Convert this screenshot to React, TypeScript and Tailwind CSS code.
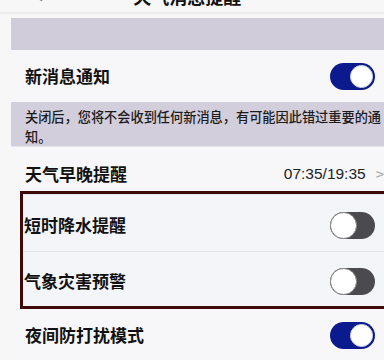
import React from "react";

const font = {
  fontFamily: '"Noto Sans CJK SC", "Noto Sans", "Liberation Sans", sans-serif',
};

function Toggle({ on }: { on: boolean }) {
  if (on) {
    return (
      <div className="w-[45px] h-[27px] rounded-full bg-[#0b1a8c] flex items-center justify-end pr-[2px] shrink-0">
        <div className="w-[23px] h-[23px] rounded-full bg-white border border-[#cfd6e8]" />
      </div>
    );
  }
  return (
    <div className="w-[45px] h-[27px] rounded-full bg-[#4a4a4f] flex items-center justify-start shrink-0">
      <div className="w-[27px] h-[27px] rounded-full bg-white border-[1.5px] border-[#8a8a90]" />
    </div>
  );
}

export default function App() {
  return (
    <div
      className="w-[384px] h-[360px] overflow-hidden bg-[#f7f7f8] text-[#111]"
      style={font}
    >
      {/* nav bar, cut off by the top of the screenshot */}
      <div className="h-[14px] overflow-hidden border-b-2 border-[#ececee]">
        <div className="flex items-center h-[24px] -mt-[16px] px-[32px]">
          <span className="text-[20px] text-[#555] font-light leading-none">&lt;</span>
          <span className="flex-1 text-center text-[18px] font-bold leading-none pr-[20px]">
            天气消息提醒
          </span>
        </div>
      </div>
      <div className="h-[4px]" />

      <div className="ml-[11px]">
        <div className="h-[32px] bg-[#d0ccd9]" />

        <div className="h-[52px] flex items-center justify-between pl-[14px] pr-[9px] bg-[#f7f7f9]">
          <span className="text-[17px] font-bold leading-[20px]">新消息通知</span>
          <Toggle on />
        </div>

        <div className="h-[45px] bg-[#d2cedb] pl-[14px] pr-[2px] pt-[5px] text-[13.2px] font-medium leading-[20px] text-[#1c1c1c] border-b border-[#e4e4ea]">
          关闭后，您将不会收到任何新消息，有可能因此错过重要的通知。
        </div>

        <div className="h-[44px] flex items-start pl-[14px] pt-[17px] bg-[#f7f7f9]">
          <span className="text-[17px] font-bold leading-[20px]">天气早晚提醒</span>
          <span
            className="ml-auto text-[15.5px] leading-[20px] text-[#222]"
            style={{ fontFamily: '"Liberation Sans", sans-serif' }}
          >
            07:35/19:35
          </span>
          <span className="ml-[10px] text-[15px] leading-[20px] text-[#aaa]">&gt;</span>
        </div>

        <div className="ml-[9px] -mr-[10px] border-[3px] border-[#3e0a0c] bg-[#f4f5f9]">
          <div className="h-[58px] flex items-center pl-[1px] pr-[16px] pt-[4px] border-t border-[#dfe6f2] border-b border-b-[#e3e3ea]">
            <span className="text-[17px] font-bold leading-[20px]">短时降水提醒</span>
            <div className="ml-auto">
              <Toggle on={false} />
            </div>
          </div>
          <div className="h-[54px] flex items-center pl-[1px] pr-[16px] pt-[4px]">
            <span className="text-[17px] font-bold leading-[20px]">气象灾害预警</span>
            <div className="ml-auto">
              <Toggle on={false} />
            </div>
          </div>
        </div>

        <div className="h-[50px] flex items-center justify-between pl-[14px] pr-[9px] pt-[2px] bg-[#f7f7f9]">
          <span className="text-[17px] font-bold leading-[20px]">夜间防打扰模式</span>
          <Toggle on />
        </div>
      </div>
    </div>
  );
}
